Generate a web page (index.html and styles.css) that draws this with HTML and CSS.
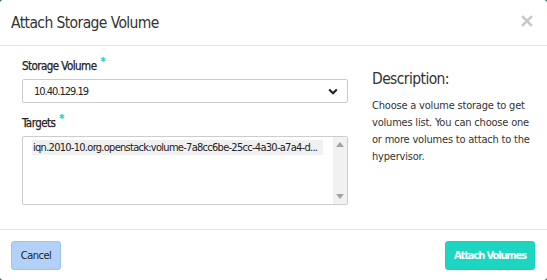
FILE: index.html
```html
<!DOCTYPE html>
<html>
<head>
<meta charset="utf-8">
<link rel="stylesheet" href="styles.css">
</head>
<body>
<div class="modal">
  <div class="modal-header">
    <h4 class="title">Attach Storage Volume</h4>
    <svg class="close" width="12" height="12" viewBox="0 0 12 12"><path d="M2 2 L10 10 M10 2 L2 10" stroke="#c9c9c9" stroke-width="2.6" stroke-linecap="square"/></svg>
  </div>
  <div class="modal-body">
    <div class="form">
      <label class="label">Storage Volume<span class="req">*</span></label>
      <div class="select">
        <span>10.40.129.19</span>
        <svg class="chev" width="10" height="7" viewBox="0 0 10 7"><path d="M1.2 1.5 L5 5.2 L8.8 1.5" fill="none" stroke="#222" stroke-width="2.2"/></svg>
      </div>
      <label class="label label-2">Targets<span class="req">*</span></label>
      <div class="multi">
        <div class="options">
          <div class="option">iqn.2010-10.org.openstack:volume-7a8cc6be-25cc-4a30-a7a4-d...</div>
        </div>
        <div class="scrollbar">
          <svg width="8" height="5" viewBox="0 0 8 5"><path d="M0 5 L4 0 L8 5Z" fill="#a3a3a3"/></svg>
          <svg width="8" height="5" viewBox="0 0 8 5"><path d="M0 0 L4 5 L8 0Z" fill="#a3a3a3"/></svg>
        </div>
      </div>
    </div>
    <div class="desc">
      <h3 class="desc-title">Description:</h3>
      <p class="desc-text">Choose a volume storage to get volumes list. You can choose one or more volumes to attach to the hypervisor.</p>
    </div>
  </div>
  <div class="modal-footer">
    <button class="btn btn-cancel">Cancel</button>
    <button class="btn btn-primary">Attach Volumes</button>
  </div>
</div>
</body>
</html>
```

FILE: styles.css
```css
html, body {
  margin: 0;
  padding: 0;
  background: #1d4f4a;
}
body {
  width: 547px;
  height: 280px;
  font-family: "DejaVu Sans Condensed", "DejaVu Sans", sans-serif;
  font-stretch: condensed;
  color: #222;
}
.modal {
  background: #fff;
  width: 547px;
  height: 280px;
  border-radius: 3px;
  box-sizing: border-box;
  display: flex;
  flex-direction: column;
}
.modal-header {
  height: 46px;
  flex: none;
  border-bottom: 1px solid #e5e5e5;
  box-sizing: border-box;
  display: flex;
  align-items: center;
  justify-content: space-between;
  padding: 0 14px 6px 11px;
}
.title {
  margin: 0;
  font-size: 15.5px;
  letter-spacing: -0.6px;
  font-weight: normal;
  color: #333;
  line-height: 20px;
  padding-top: 6px;
}
.close {
  display: block;
  margin-top: 2px;
}
.modal-body {
  height: 184px;
  flex: none;
  display: flex;
  padding: 12px 0 0 22px;
  box-sizing: border-box;
  border-bottom: 1px solid #e5e5e5;
}
.form {
  width: 326px;
  display: flex;
  flex-direction: column;
}
.label {
  font-size: 11.5px;
  letter-spacing: -0.55px;
  font-weight: normal;
  -webkit-text-stroke: 0.25px #222;
  color: #222;
  height: 16px;
  line-height: 16px;
  margin-bottom: 5px;
}
.label-2 { margin-top: 12px; }
.req {
  color: #1dd6c1;
  -webkit-text-stroke: 0.4px #1dd6c1;
  font-size: 11px;
  position: relative;
  top: -5px;
  margin-left: 4px;
}
.select {
  height: 24px;
  border: 1px solid #ccc;
  border-radius: 2px;
  box-sizing: border-box;
  display: flex;
  align-items: center;
  justify-content: space-between;
  padding: 0 9px 0 11px;
  font-size: 11px;
  letter-spacing: -1px;
}
.multi {
  height: 69px;
  border: 1px solid #ccc;
  border-radius: 2px;
  box-sizing: border-box;
  display: flex;
}
.options {
  flex: 1;
  min-width: 0;
  padding: 3px 10px 0 9px;
}
.option {
  background: #f0f0f0;
  font-size: 11px;
  letter-spacing: -0.72px;
  line-height: 15px;
  padding-left: 1px;
  white-space: nowrap;
}
.scrollbar {
  width: 14px;
  flex: none;
  background: #f1f1f1;
  display: flex;
  flex-direction: column;
  align-items: center;
  justify-content: space-between;
  padding: 5px 0 5px;
  box-sizing: border-box;
}
.desc {
  margin-left: 24px;
  width: 164px;
}
.desc-title {
  margin: 10px 0 7px;
  font-size: 15.5px;
  letter-spacing: -0.6px;
  font-weight: normal;
  color: #333;
  line-height: 22px;
}
.desc-text {
  margin: 0;
  font-size: 11px;
  letter-spacing: -0.2px;
  line-height: 17px;
  color: #333;
}
.modal-footer {
  flex: 1;
  display: flex;
  align-items: center;
  justify-content: space-between;
  padding: 0 12px 0 11px;
}
.btn {
  height: 29px;
  border-radius: 3px;
  font-family: inherit;
  font-stretch: condensed;
  font-size: 11px;
  padding: 0;
  white-space: nowrap;
  cursor: pointer;
}
.btn-cancel {
  background: #b3d1f6;
  border: 1px solid #9fc2ee;
  color: #222;
  width: 50px;
  letter-spacing: -0.5px;
}
.btn-primary {
  background: #1dd6c1;
  border: 1px solid #1bcfbb;
  color: #fff;
  font-weight: bold;
  letter-spacing: -1.1px;
  width: 90px;
}
```
